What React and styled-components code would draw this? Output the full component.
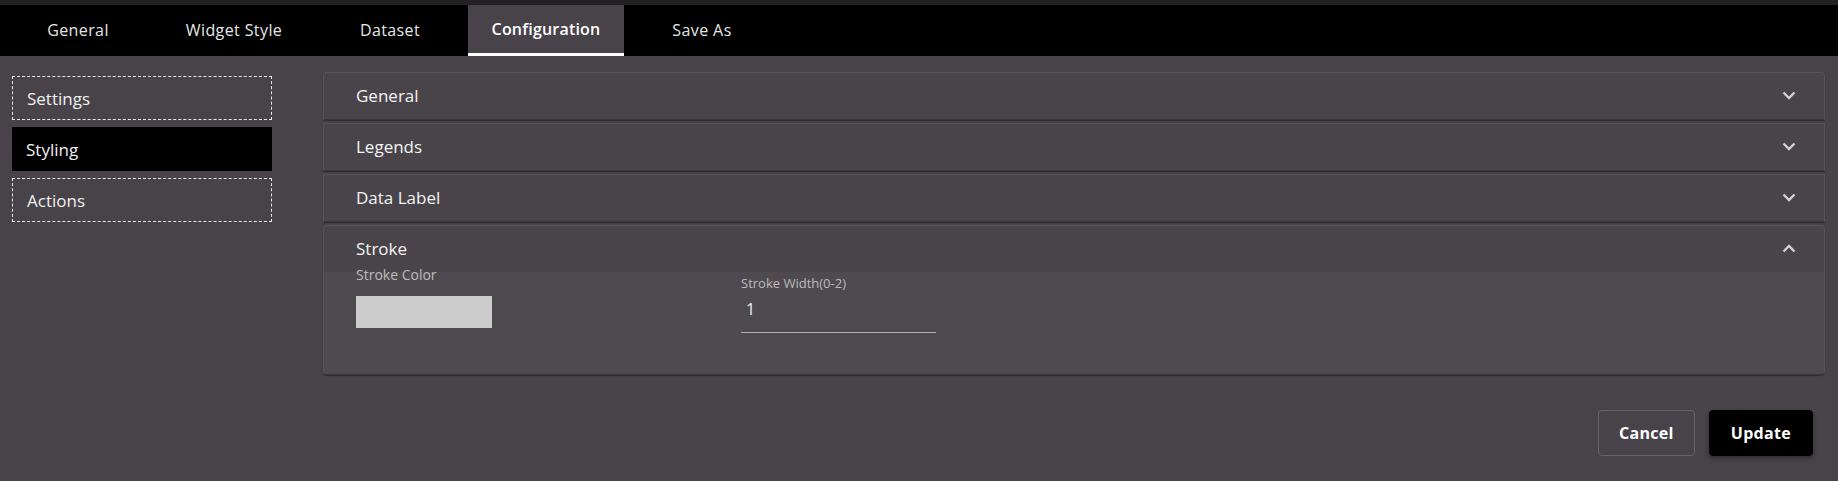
import React from 'react';
import styled, { createGlobalStyle } from 'styled-components';

const GlobalStyle = createGlobalStyle`
  html, body {
    margin: 0;
    padding: 0;
    background: #484349;
  }
  body {
    font-family: 'Open Sans', 'Liberation Sans', sans-serif;
    color: #f2f2f2;
  }
`;

const Page = styled.div`
  width: 1838px;
  height: 481px;
  background: #484349;
  border-top: 5px solid #232123;
  box-sizing: border-box;
  overflow: hidden;
`;

const TabBar = styled.div`
  display: flex;
  height: 51px;
  background: #000;
`;

const Tab = styled.div`
  flex: 0 0 156px;
  display: flex;
  align-items: center;
  justify-content: center;
  box-sizing: border-box;
  font-size: 16px;
  letter-spacing: ${(p) => (p.$active ? '0.2px' : '0.4px')};
  font-weight: ${(p) => (p.$active ? 600 : 400)};
  color: ${(p) => (p.$active ? '#fff' : '#e6e6e6')};
  background: ${(p) => (p.$active ? '#484349' : 'transparent')};
  border-bottom: 3px solid ${(p) => (p.$active ? '#fff' : 'transparent')};
  padding-top: 2px;
  padding-bottom: ${(p) => (p.$active ? '2px' : '0')};
`;

const Body = styled.div`
  display: flex;
  align-items: flex-start;
`;

const Sidebar = styled.div`
  width: 260px;
  margin: 20px 0 0 12px;
  display: flex;
  flex-direction: column;
  gap: 7px;
`;

const SideItem = styled.div`
  height: 44px;
  box-sizing: border-box;
  display: flex;
  align-items: center;
  padding-left: ${(p) => (p.$active ? '13px' : '14px')};
  font-size: 17px;
  color: #f0f0f0;
  background: ${(p) => (p.$active ? '#000' : 'transparent')};
  border: 1px dashed ${(p) => (p.$active ? 'transparent' : '#e8e8e8')};
`;

const Main = styled.div`
  flex: 1;
  margin: 16px 13px 0 51px;
  display: flex;
  flex-direction: column;
`;

const Accordion = styled.div`
  display: flex;
  flex-direction: column;
  gap: 3px;
`;

const Item = styled.div`
  background: #48444a;
  border: 1px solid #565258;
  border-bottom-color: #3a363c;
  border-radius: ${(p) => (p.$first ? '4px 4px 0 0' : p.$last ? '4px' : '0')};
  box-shadow: 0 1px 1px rgba(0, 0, 0, 0.35);
  overflow: hidden;
`;

const Summary = styled.div`
  height: 46px;
  display: flex;
  align-items: center;
  justify-content: space-between;
  padding: 0 28px 1px 32px;
  box-sizing: border-box;
  font-size: 17px;
  color: #f4f4f4;
`;

const Details = styled.div`
  background: #4e4a50;
  padding: 0 32px 41px 32px;
  display: grid;
  grid-template-columns: 385px 195px;
  align-items: start;
`;

const Field = styled.div`
  display: flex;
  flex-direction: column;
`;

const Label = styled.div`
  font-size: ${(p) => (p.$small ? '13px' : '14px')};
  line-height: 16px;
  color: #bdbabd;
  margin-top: ${(p) => (p.$small ? '3px' : '-5px')};
`;

const Swatch = styled.div`
  width: 136px;
  height: 32px;
  margin-top: 13px;
  background: #cccccc;
`;

const Input = styled.div`
  padding: 8px 5px 13px;
  line-height: 20px;
  font-size: 16px;
  color: #f0f0f0;
  border-bottom: 1px solid #b0adb0;
`;

const Actions = styled.div`
  display: flex;
  justify-content: flex-end;
  gap: 14px;
  margin: 35px 12px 0 0;
`;

const Button = styled.div`
  height: 46px;
  box-sizing: border-box;
  padding: 0 ${(p) => (p.$primary ? '21px' : '20px')};
  display: flex;
  align-items: center;
  border-radius: 4px;
  font-size: 16px;
  letter-spacing: 0.3px;
  font-weight: 700;
  color: #fff;
  background: ${(p) => (p.$primary ? '#000' : 'transparent')};
  border: 1px solid ${(p) => (p.$primary ? '#000' : '#66616a')};
  box-shadow: ${(p) => (p.$primary ? '0 2px 4px rgba(0,0,0,0.4)' : 'none')};
`;

const Chevron = ({ up }) => (
  <svg width="14" height="9" viewBox="0 0 14 9">
    <path
      d={up ? 'M1.5 7.5 L7 2 L12.5 7.5' : 'M1.5 1.5 L7 7 L12.5 1.5'}
      fill="none"
      stroke="#d4d2d4"
      strokeWidth="2.4"
    />
  </svg>
);

const tabs = ['General', 'Widget Style', 'Dataset', 'Configuration', 'Save As'];
const sections = ['General', 'Legends', 'Data Label'];

export default function App() {
  return (
    <Page>
      <GlobalStyle />
      <TabBar>
        {tabs.map((t) => (
          <Tab key={t} $active={t === 'Configuration'}>{t}</Tab>
        ))}
      </TabBar>
      <Body>
        <Sidebar>
          <SideItem>Settings</SideItem>
          <SideItem $active>Styling</SideItem>
          <SideItem>Actions</SideItem>
        </Sidebar>
        <Main>
          <Accordion>
            {sections.map((s, i) => (
              <Item key={s} $first={i === 0}>
                <Summary>
                  {s}
                  <Chevron />
                </Summary>
              </Item>
            ))}
            <Item $last>
              <Summary>
                Stroke
                <Chevron up />
              </Summary>
              <Details>
                <Field>
                  <Label>Stroke Color</Label>
                  <Swatch />
                </Field>
                <Field>
                  <Label $small>Stroke Width(0-2)</Label>
                  <Input>1</Input>
                </Field>
              </Details>
            </Item>
          </Accordion>
          <Actions>
            <Button>Cancel</Button>
            <Button $primary>Update</Button>
          </Actions>
        </Main>
      </Body>
    </Page>
  );
}
